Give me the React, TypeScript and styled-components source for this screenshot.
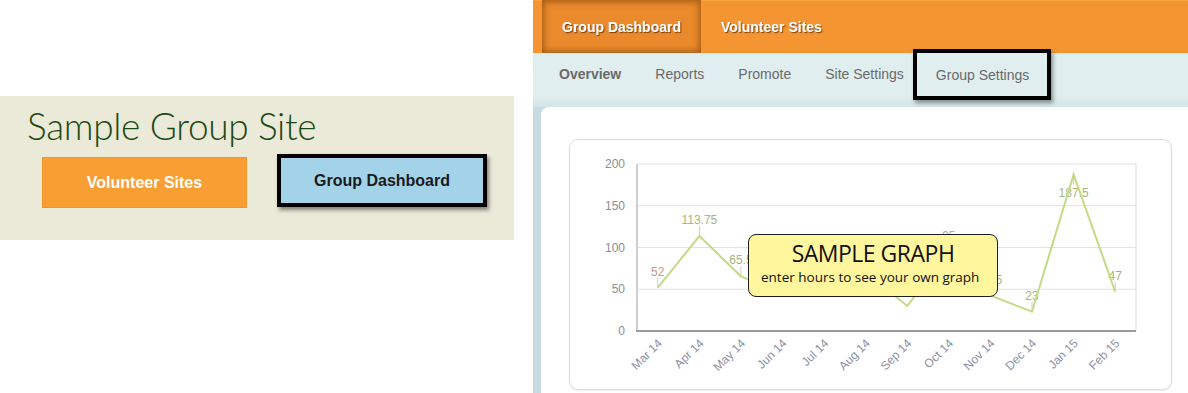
import React from "react";
import styled, { createGlobalStyle } from "styled-components";

const GlobalStyle = createGlobalStyle`
  html, body {
    margin: 0;
    padding: 0;
    background: #ffffff;
    font-family: "Liberation Sans", Arial, sans-serif;
  }
`;

const Page = styled.div`
  display: flex;
  width: 1188px;
  height: 393px;
  overflow: hidden;
`;

// 左側：サイトのヘッダー
const SitePanel = styled.div`
  width: 514px;
  padding-top: 96px;
  flex-shrink: 0;
`;

const SiteBox = styled.div`
  height: 144px;
  background: #ebe9d8;
  box-sizing: border-box;
  padding: 8px 0 0 27px;
`;

const SiteTitle = styled.h1`
  margin: 0;
  font-family: Lato, "Open Sans", sans-serif;
  font-weight: 300;
  font-size: 37px;
  line-height: 44px;
  color: #1d4a14;
  letter-spacing: -0.35px;
`;

const SiteButtons = styled.div`
  display: flex;
  align-items: flex-start;
  gap: 30px;
  margin-top: 9px;
  padding-left: 15px;
`;

const SiteButton = styled.div<{ $active?: boolean }>`
  display: flex;
  align-items: center;
  justify-content: center;
  box-sizing: border-box;
  font-weight: bold;
  font-size: 16px;
  width: ${(p) => (p.$active ? "210px" : "205px")};
  height: ${(p) => (p.$active ? "53px" : "51px")};
  margin-top: ${(p) => (p.$active ? "-3px" : "0")};
  background: ${(p) => (p.$active ? "#a3d3e8" : "#f89e32")};
  color: ${(p) => (p.$active ? "#1a1a1a" : "#ffffff")};
  border: ${(p) => (p.$active ? "4px solid #000" : "1px solid #f3962a")};
  box-shadow: ${(p) => (p.$active ? "2px 3px 4px rgba(0,0,0,0.45)" : "none")};
`;

// 右側：ダッシュボード
const Dashboard = styled.div`
  margin-left: 19px;
  width: 655px;
  display: flex;
  flex-direction: column;
  background: #e0eeef;
`;

const TopNav = styled.div`
  height: 53px;
  background: #f59532;
  border-top: 1px solid #fba43a;
  box-sizing: border-box;
  display: flex;
  padding-left: 9px;
`;

const TopTab = styled.div<{ $active?: boolean }>`
  display: flex;
  align-items: center;
  padding: 0 20px;
  font-size: 14px;
  font-weight: bold;
  color: #ffffff;
  text-shadow: 1px 1px 1px rgba(60, 30, 0, 0.7);
  margin-top: -1px;
  background: ${(p) => (p.$active ? "#ea8a2c" : "transparent")};
  box-shadow: ${(p) =>
    p.$active ? "inset 0 0 6px 2px rgba(110, 55, 0, 0.55)" : "none"};
`;

const SubNav = styled.div`
  height: 54px;
  display: flex;
  align-items: flex-start;
  padding-left: 26px;
  background: linear-gradient(#e0eeef 0%, #e0eeef 78%, #d3e4e6 100%);
`;

const SubTab = styled.div<{ $active?: boolean; $boxed?: boolean }>`
  font-size: 14px;
  color: #6a6a6a;
  font-weight: ${(p) => (p.$active ? "bold" : "normal")};
  height: ${(p) => (p.$boxed ? "51px" : "auto")};
  box-sizing: border-box;
  margin-top: ${(p) => (p.$boxed ? "-4px" : "13px")};
  padding: ${(p) => (p.$boxed ? "14px 18px 0 19px" : "0")};
  margin-right: ${(p) => (p.$boxed ? "0" : "34px")};
  margin-left: ${(p) => (p.$boxed ? "-25px" : "0")};
  border: ${(p) => (p.$boxed ? "4px solid #000" : "none")};
  box-shadow: ${(p) => (p.$boxed ? "2px 3px 4px rgba(0,0,0,0.4)" : "none")};
`;

const ContentArea = styled.div`
  flex: 1;
  padding-left: 8px;
  background: linear-gradient(90deg, #c6dbdf 0%, #d8e8ea 100%);
`;

const Card = styled.div`
  height: 100%;
  background: #ffffff;
  border-top-left-radius: 8px;
  padding: 32px 16px 0 28px;
  box-sizing: border-box;
`;

const ChartCard = styled.div`
  position: relative;
  width: 603px;
  height: 251px;
  box-sizing: border-box;
  border: 1px solid #dddddd;
  border-radius: 9px;
  box-shadow: 0 1px 2px rgba(0, 0, 0, 0.08);
  background: #ffffff;
`;

const SampleNote = styled.div`
  position: absolute;
  left: 178px;
  top: 94px;
  width: 250px;
  height: 63px;
  box-sizing: border-box;
  background: #fff69e;
  border: 1px solid #1e1e1e;
  border-radius: 8px;
  padding: 3px 0 0 12px;
  font-family: "Open Sans", Lato, sans-serif;
  color: #111;
`;

const NoteTitle = styled.div`
  font-size: 23px;
  line-height: 30px;
  text-align: center;
  padding-right: 12px;
  letter-spacing: -0.5px;
`;

const NoteText = styled.div`
  font-size: 13.5px;
  line-height: 18px;
  letter-spacing: 0;
`;

const months = [
  "Mar 14", "Apr 14", "May 14", "Jun 14", "Jul 14", "Aug 14",
  "Sep 14", "Oct 14", "Nov 14", "Dec 14", "Jan 15", "Feb 15",
];
const values = [52, 113.75, 65.5, 45, 60, 70, 30, 95, 42.5, 23, 187.5, 47];
// 注意書きの下に完全に隠れるラベル
const hiddenLabels = [3, 4, 5, 6];

const PL = 67;
const PR = 566;
const PT = 24;
const PB = 191;
const step = (PR - PL) / 12;
const px = (i: number) => PL + (i + 0.5) * step;
const py = (v: number) => PB - (v * (PB - PT)) / 200;

function Chart() {
  const points = values.map((v, i) => `${px(i)},${py(v)}`).join(" ");
  return (
    <svg width="601" height="249" style={{ display: "block" }}>
      {[200, 150, 100, 50].map((t) => (
        <line key={t} x1={PL} x2={PR} y1={py(t)} y2={py(t)} stroke="#e2e2e2" strokeWidth="1" />
      ))}
      <line x1={PR} x2={PR} y1={PT} y2={PB} stroke="#dcdcdc" strokeWidth="1" />
      <line x1={PL} x2={PL} y1={PT} y2={PB} stroke="#cfcfcf" strokeWidth="2" />
      <line x1={PL - 1} x2={PR} y1={PB} y2={PB} stroke="#9a9a9a" strokeWidth="2" />
      {[200, 150, 100, 50, 0].map((t) => (
        <text
          key={t}
          x={55}
          y={py(t) + 4}
          textAnchor="end"
          fontSize="12"
          fill="#8b8e98"
          fontFamily="'Liberation Sans', Arial, sans-serif"
        >
          {t}
        </text>
      ))}
      {months.map((m, i) => (
        <text
          key={m}
          x={0}
          y={0}
          textAnchor="end"
          fontSize="12"
          fill="#8c90a2"
          fontFamily="'Liberation Sans', Arial, sans-serif"
          transform={`translate(${px(i) + 5},${PB + 13}) rotate(-45)`}
        >
          {m}
        </text>
      ))}
      {values.map((v, i) => {
        if (hiddenLabels.includes(i)) return null;
        const below = v > 150;
        const y = py(v);
        return (
          <g key={i}>
            <line
              x1={px(i)}
              x2={px(i)}
              y1={below ? y : y - 10}
              y2={below ? y + 10 : y}
              stroke="#cccccc"
              strokeWidth="1"
            />
            <text
              x={px(i)}
              y={below ? y + 23 : y - 12}
              textAnchor="middle"
              fontSize="12"
              fill={i === 0 ? "#c49a8c" : "#a7b57c"}
              fontFamily="'Liberation Sans', Arial, sans-serif"
            >
              {v}
            </text>
          </g>
        );
      })}
      <polyline points={points} fill="none" stroke="#c3da86" strokeWidth="2" strokeLinejoin="miter" />
    </svg>
  );
}

export default function App() {
  return (
    <>
      <GlobalStyle />
      <Page>
        <SitePanel>
          <SiteBox>
            <SiteTitle>Sample Group Site</SiteTitle>
            <SiteButtons>
              <SiteButton>Volunteer Sites</SiteButton>
              <SiteButton $active>Group Dashboard</SiteButton>
            </SiteButtons>
          </SiteBox>
        </SitePanel>
        <Dashboard>
          <TopNav>
            <TopTab $active>Group Dashboard</TopTab>
            <TopTab>Volunteer Sites</TopTab>
          </TopNav>
          <SubNav>
            <SubTab $active>Overview</SubTab>
            <SubTab>Reports</SubTab>
            <SubTab>Promote</SubTab>
            <SubTab>Site Settings</SubTab>
            <SubTab $boxed>Group Settings</SubTab>
          </SubNav>
          <ContentArea>
            <Card>
              <ChartCard>
                <Chart />
                <SampleNote>
                  <NoteTitle>SAMPLE GRAPH</NoteTitle>
                  <NoteText>enter hours to see your own graph</NoteText>
                </SampleNote>
              </ChartCard>
            </Card>
          </ContentArea>
        </Dashboard>
      </Page>
    </>
  );
}
